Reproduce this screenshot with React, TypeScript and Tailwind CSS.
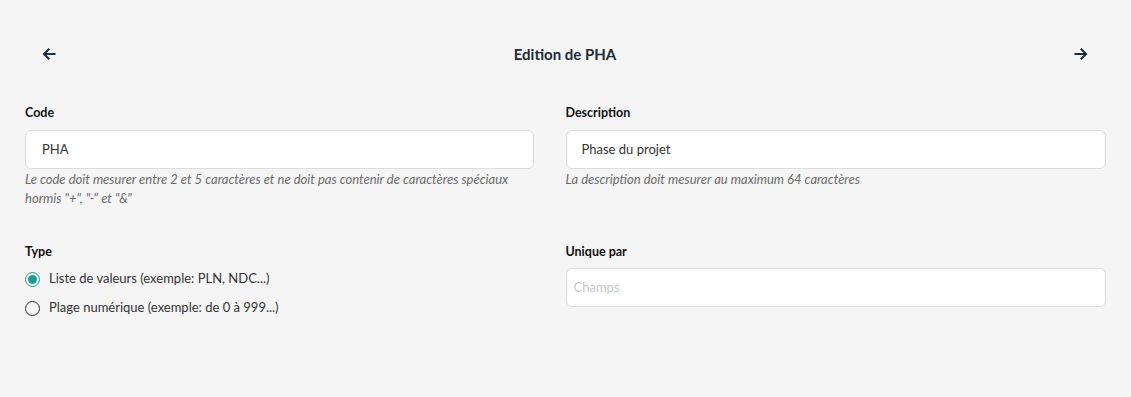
import React from "react";

function ArrowLeft() {
  return (
    <svg width="14" height="14" viewBox="0 0 14 14" fill="none" stroke="#1f2a33" strokeWidth="2" strokeLinecap="square">
      <path d="M12.5 7H2.5" />
      <path d="M6.5 2.5L2 7l4.5 4.5" />
    </svg>
  );
}

function ArrowRight() {
  return (
    <svg width="14" height="14" viewBox="0 0 14 14" fill="none" stroke="#1f2a33" strokeWidth="2" strokeLinecap="square">
      <path d="M1.5 7H11.5" />
      <path d="M7.5 2.5L12 7l-4.5 4.5" />
    </svg>
  );
}

export default function App() {
  return (
    <div
      className="w-[1131px] h-[397px] bg-[#f5f5f5] text-[#212529]"
      style={{ fontFamily: '"Lato", "Open Sans", sans-serif' }}
    >
      <div className="flex items-center justify-between pl-[42px] pr-[43px] pt-[46px] h-[62px]">
        <ArrowLeft />
        <div className="text-[15px] font-bold text-[#1e2a35]">Edition de PHA</div>
        <ArrowRight />
      </div>

      <div className="grid grid-cols-2 px-[25px] mt-[42px]">
        <div className="pr-8">
          <div className="text-[12.5px] font-bold leading-[18px] h-[18px] text-[#111]">Code</div>
          <div className="mt-[8px] h-[39px] rounded-[6px] border border-[#dcdcdc] bg-white flex items-center px-[16px] text-[13px] text-[#333]">
            PHA
          </div>
          <div className="mt-[1px] text-[13px] italic leading-[19px] text-[#6b6b6b]">
            Le code doit mesurer entre 2 et 5 caractères et ne doit pas contenir de caractères spéciaux hormis "+", "-" et "&"
          </div>
        </div>
        <div>
          <div className="text-[12.5px] font-bold leading-[18px] h-[18px] text-[#111]">Description</div>
          <div className="mt-[8px] h-[39px] rounded-[6px] border border-[#dcdcdc] bg-white flex items-center px-[15px] text-[13px] text-[#333]">
            Phase du projet
          </div>
          <div className="mt-[1px] text-[13px] italic leading-[19px] text-[#6b6b6b]">
            La description doit mesurer au maximum 64 caractères
          </div>
        </div>
      </div>

      <div className="grid grid-cols-2 px-[25px] mt-[35px]">
        <div className="pr-8">
          <div className="text-[12.5px] font-bold leading-[18px] h-[18px] text-[#111]">Type</div>
          <div className="mt-[9px] flex items-center gap-[9px] h-[18px]">
            <span className="w-[15px] h-[15px] rounded-full border-[1.5px] border-[#1e9e8c] flex items-center justify-center">
              <span className="w-[9px] h-[9px] rounded-full bg-[#1e9e8c]" />
            </span>
            <span className="text-[13px] text-[#333]">Liste de valeurs (exemple: PLN, NDC...)</span>
          </div>
          <div className="mt-[11px] flex items-center gap-[9px] h-[18px]">
            <span className="w-[15px] h-[15px] rounded-full border-[1.5px] border-[#2b2f33]" />
            <span className="text-[13px] text-[#333]">Plage numérique (exemple: de 0 à 999...)</span>
          </div>
        </div>
        <div>
          <div className="text-[12.5px] font-bold leading-[18px] h-[18px] text-[#111]">Unique par</div>
          <div className="mt-[7px] h-[39px] rounded-[6px] border border-[#dcdcdc] bg-white flex items-center px-[7px] text-[13px] text-[#c8c8c8]">
            Champs
          </div>
        </div>
      </div>
    </div>
  );
}
